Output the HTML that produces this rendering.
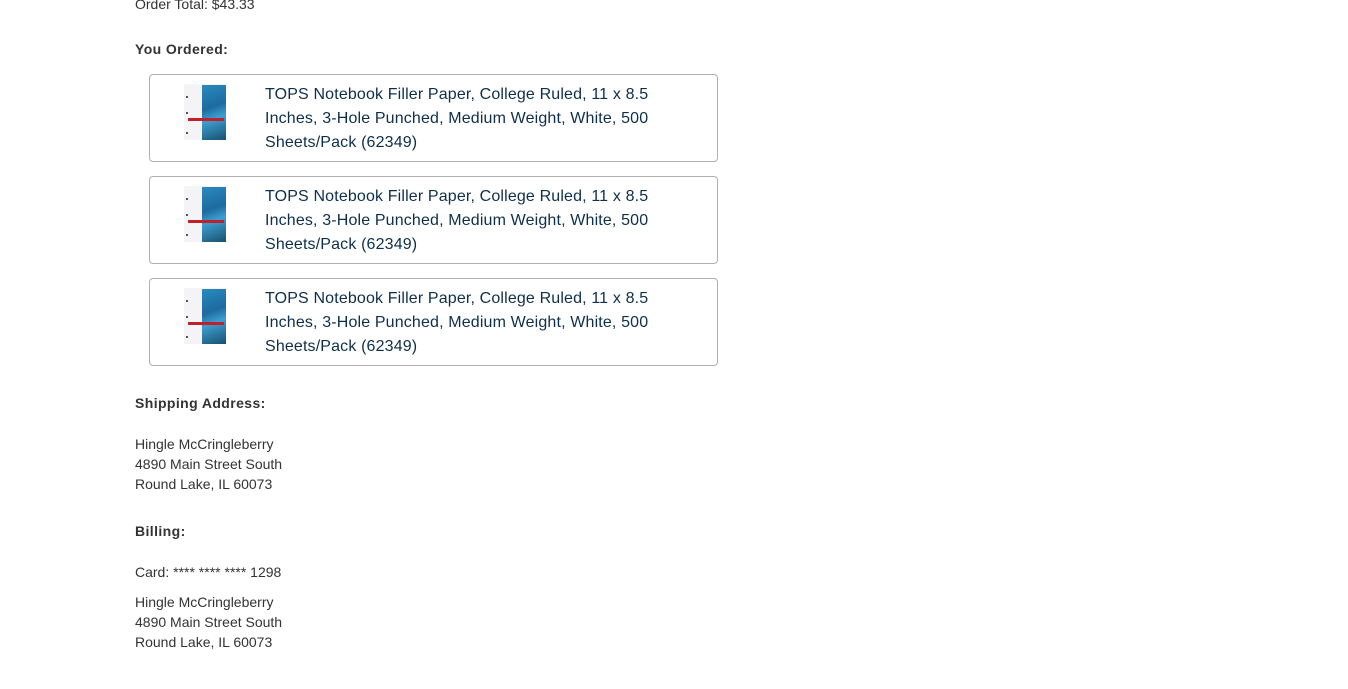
<!DOCTYPE html>
<html><head><style>
body{margin:0;background:#fff;font-family:"Liberation Sans",sans-serif;color:#333;font-size:14px;width:1348px;height:689px;overflow:hidden;position:relative}
.a{position:absolute;left:135px}
b{font-weight:bold;letter-spacing:0.4px}
.box{position:absolute;left:149px;width:567px;height:86px;border:1px solid #b0b0b0;border-radius:4px}
.img{position:absolute;left:34px;top:9px;width:42px;height:56px;background:#f4f4f6}
.img .bl{position:absolute;left:18px;top:1px;width:24px;height:55px;background:linear-gradient(160deg,#2a8ac0,#1d6aa0 40%,#3f9ed0 60%,#17506e)}
.img .r{position:absolute;left:4px;top:34px;width:36px;height:3px;background:#c0202a}
.img .d{position:absolute;left:2px;width:2px;height:2px;background:#555}
.t{position:absolute;left:115px;top:8px;width:430px;font-size:16px;line-height:24px;color:#0e2f4a;letter-spacing:0.15px}
.l{line-height:20px}
</style></head><body>
<div class="a" style="top:-5px;line-height:18px">Order Total: $43.33</div>
<div class="a" style="top:41px"><b>You Ordered:</b></div>
<div class="box" style="top:74px"><div class="img"><div class="bl"></div><div class="r"></div><div class="d" style="top:12px"></div><div class="d" style="top:28px"></div><div class="d" style="top:48px"></div></div><div class="t">TOPS Notebook Filler Paper, College Ruled, 11 x 8.5 Inches, 3-Hole Punched, Medium Weight, White, 500 Sheets/Pack (62349)</div></div>
<div class="box" style="top:176px"><div class="img"><div class="bl"></div><div class="r"></div><div class="d" style="top:12px"></div><div class="d" style="top:28px"></div><div class="d" style="top:48px"></div></div><div class="t">TOPS Notebook Filler Paper, College Ruled, 11 x 8.5 Inches, 3-Hole Punched, Medium Weight, White, 500 Sheets/Pack (62349)</div></div>
<div class="box" style="top:278px"><div class="img"><div class="bl"></div><div class="r"></div><div class="d" style="top:12px"></div><div class="d" style="top:28px"></div><div class="d" style="top:48px"></div></div><div class="t">TOPS Notebook Filler Paper, College Ruled, 11 x 8.5 Inches, 3-Hole Punched, Medium Weight, White, 500 Sheets/Pack (62349)</div></div>
<div class="a" style="top:395px"><b>Shipping Address:</b></div>
<div class="a l" style="top:434px">Hingle McCringleberry<br>4890 Main Street South<br>Round Lake, IL 60073</div>
<div class="a" style="top:523px"><b>Billing:</b></div>
<div class="a l" style="top:562px">Card: **** **** **** 1298</div>
<div class="a l" style="top:592px">Hingle McCringleberry<br>4890 Main Street South<br>Round Lake, IL 60073</div>
</body></html>
